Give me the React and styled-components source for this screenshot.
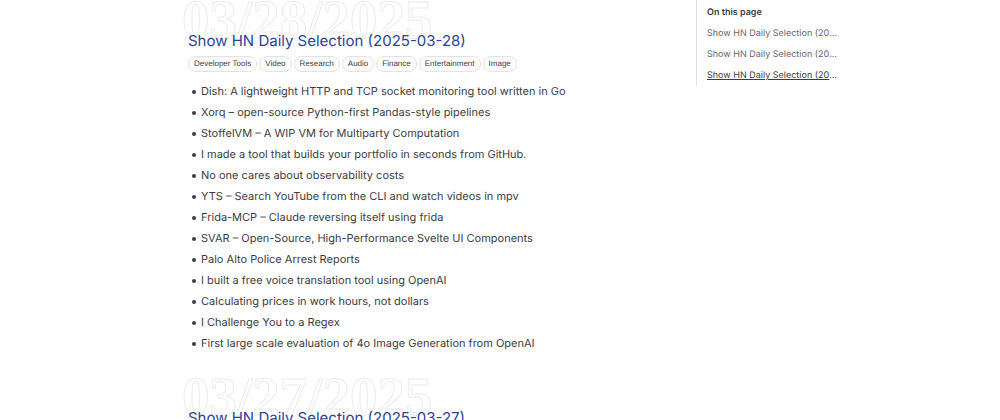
import styled, { createGlobalStyle } from 'styled-components';

const GlobalStyle = createGlobalStyle`
  * {
    box-sizing: border-box;
  }

  body {
    margin: 0;
    background: #fff;
    color: #3c3c43;
    font-family: Inter, "Liberation Sans", sans-serif;
    text-rendering: geometricPrecision;
  }
`;

const Page = styled.div`
  display: flex;
  align-items: flex-start;
  gap: 24px;
  max-width: 682px;
  height: 100vh;
  margin: 0 auto;
  padding-left: 29px;
  overflow: hidden;
`;

const Main = styled.main`
  flex: 1;
  min-width: 0;
`;

const Section = styled.section`
  position: relative;
  padding-top: 30px;
  padding-bottom: 23px;
`;

const Backdrop = styled.time`
  position: absolute;
  top: -10px;
  left: -6px;
  z-index: -1;
  font-family: "Liberation Serif", serif;
  font-size: 55px;
  font-weight: 700;
  line-height: 60px;
  color: #fff;
  -webkit-text-stroke: 1px #ececee;
`;

const Title = styled.h2`
  margin: 0 0 4px;
  font-size: 15px;
  font-weight: 400;
  line-height: 22px;
  color: #2c4396;
`;

const Tags = styled.div`
  display: flex;
  flex-wrap: wrap;
  gap: 2px;
  margin-bottom: 9px;
`;

const Tag = styled.span`
  padding: 0 5px;
  border: 1px solid #e2e2e3;
  border-radius: 8px;
  font-family: "Liberation Sans", Arial, sans-serif;
  font-size: 8px;
  line-height: 14px;
`;

const List = styled.ul`
  margin: 0;
  padding-left: 4px;
  list-style: none;
  font-size: 11px;
  line-height: 21px;
`;

const Item = styled.li`
  display: flex;
  align-items: center;
  gap: 5px;

  &::before {
    content: '';
    flex: none;
    width: 4px;
    height: 4px;
    border-radius: 50%;
    background: #3c3c43;
  }
`;

const Outline = styled.nav`
  width: 145px;
  padding: 2px 0 0 10px;
  border-left: 1px solid #e2e2e3;
  font-size: 9px;
  line-height: 21px;
`;

const OutlineTitle = styled.div`
  font-weight: 600;
`;

const OutlineLink = styled.a`
  display: block;
  overflow: hidden;
  white-space: nowrap;
  text-overflow: ellipsis;
  color: ${(props) => (props.$active ? '#3c3c43' : '#67676c')};
  text-decoration: ${(props) => (props.$active ? 'underline' : 'none')};
`;

const days = [
  {
    id: '2025-03-28',
    label: '03/28/2025',
    tags: ['Developer Tools', 'Video', 'Research', 'Audio', 'Finance', 'Entertainment', 'Image'],
    items: [
      'Dish: A lightweight HTTP and TCP socket monitoring tool written in Go',
      'Xorq – open-source Python-first Pandas-style pipelines',
      'StoffelVM – A WIP VM for Multiparty Computation',
      'I made a tool that builds your portfolio in seconds from GitHub.',
      'No one cares about observability costs',
      'YTS – Search YouTube from the CLI and watch videos in mpv',
      'Frida-MCP – Claude reversing itself using frida',
      'SVAR – Open-Source, High-Performance Svelte UI Components',
      'Palo Alto Police Arrest Reports',
      'I built a free voice translation tool using OpenAI',
      'Calculating prices in work hours, not dollars',
      'I Challenge You to a Regex',
      'First large scale evaluation of 4o Image Generation from OpenAI',
    ],
  },
  { id: '2025-03-27', label: '03/27/2025', tags: [], items: [] },
];

const outline = ['2025-03-30', '2025-03-29', '2025-03-28'];

function Day({ day }) {
  return (
    <Section id={day.id}>
      <Backdrop dateTime={day.id}>{day.label}</Backdrop>
      <Title>Show HN Daily Selection ({day.id})</Title>
      {day.tags.length > 0 && (
        <Tags>
          {day.tags.map((tag) => (
            <Tag key={tag}>{tag}</Tag>
          ))}
        </Tags>
      )}
      {day.items.length > 0 && (
        <List>
          {day.items.map((item) => (
            <Item key={item}>{item}</Item>
          ))}
        </List>
      )}
    </Section>
  );
}

export default function App() {
  return (
    <>
      <GlobalStyle />
      <Page>
        <Main>
          {days.map((day) => (
            <Day key={day.id} day={day} />
          ))}
        </Main>
        <Outline aria-label="On this page">
          <OutlineTitle>On this page</OutlineTitle>
          {outline.map((id) => (
            <OutlineLink key={id} href={`#${id}`} $active={id === '2025-03-28'}>
              Show HN Daily Selection ({id})
            </OutlineLink>
          ))}
        </Outline>
      </Page>
    </>
  );
}
